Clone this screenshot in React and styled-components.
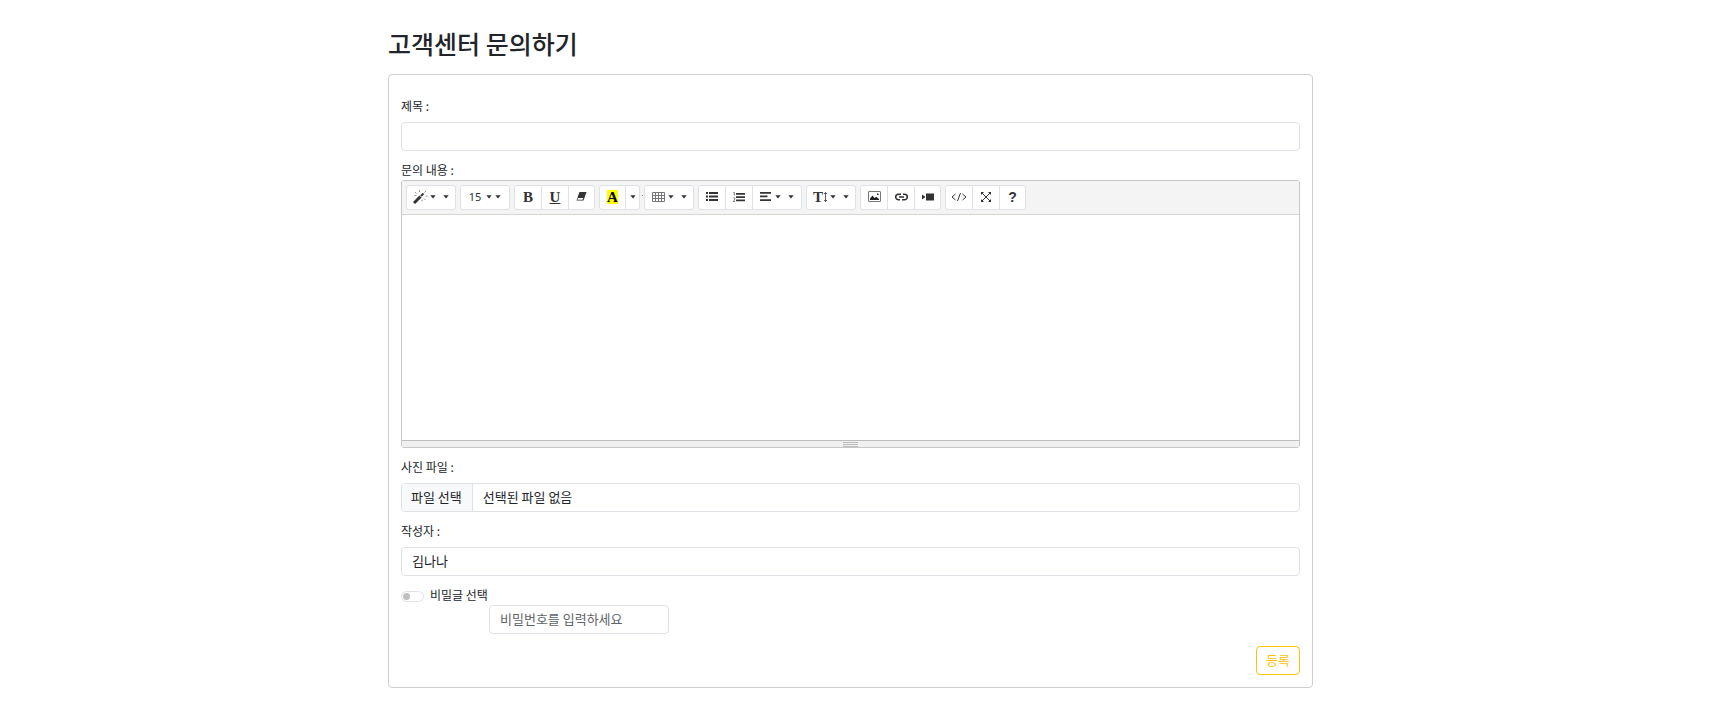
import React from "react";
import styled, { createGlobalStyle } from "styled-components";

const GlobalStyle = createGlobalStyle`
  *, *::before, *::after { box-sizing: border-box; }
  body {
    margin: 0;
    background: #fff;
    color: #212529;
    font-family: "Noto Sans CJK KR", "Noto Sans", sans-serif;
    font-size: 12px;
    line-height: 16px;
  }
  button, input, textarea { font: inherit; color: inherit; margin: 0; }
`;

const Page = styled.main`
  padding: 26px 12px 28px 0;
`;

const Container = styled.div`
  width: 100%;
  max-width: 925px;
  margin: 0 auto;
`;

const Title = styled.h1`
  margin: 0;
  padding-bottom: 14px;
  font-size: 25px;
  line-height: 34px;
  font-weight: 500;
`;

const Card = styled.form`
  display: flex;
  flex-direction: column;
  padding: 12px;
  border: 1px solid #cfcfcf;
  border-radius: 4px;
`;

const Field = styled.div`
  display: flex;
  flex-direction: column;
  gap: ${(p) => (p.$tight ? 2 : 8)}px;
  margin-top: 11px;
`;

const Label = styled.label`
  align-self: flex-start;
`;

const TextInput = styled.input`
  width: ${(p) => p.$width || "100%"};
  height: 29px;
  padding: 0 10px 2px;
  border: 1px solid #dee2e6;
  border-radius: 4px;
  background: #fff;
  font-size: 13px;
  outline: none;
  &::placeholder { color: #5f6469; opacity: 1; }
`;

const Editor = styled.div`
  border: 1px solid #c8c8c8;
  border-radius: 3px;
  overflow: hidden;
`;

const Toolbar = styled.div`
  display: flex;
  flex-wrap: wrap;
  gap: 4px;
  padding: 4px;
  background: #f4f4f4;
  border-bottom: 1px solid #d6d6d6;
`;

const Group = styled.div`
  position: relative;
  display: flex;
  border: 1px solid #dee2e6;
  border-radius: 3px;
  background: #fff;
  ${(p) =>
    p.$dot &&
    `&::after {
      content: "";
      position: absolute;
      right: -4px;
      top: 9px;
      width: 1px;
      height: 1px;
      background: #888;
    }`}
`;

const ToolButton = styled.button`
  display: flex;
  align-items: center;
  justify-content: center;
  width: ${(p) => p.$width || 27}px;
  height: 23px;
  padding: 0 0 2px;
  border: 0;
  background: transparent;
  color: #333;
  cursor: pointer;
  & + & { border-left: 1px solid #dee2e6; }
`;

const Size = styled.span`
  font-family: "Noto Sans", sans-serif;
  font-size: 11px;
  line-height: 16px;
  margin-right: 3px;
`;

const Carets = styled.span`
  display: flex;
  gap: ${(p) => p.$gap || 7}px;
  margin-left: ${(p) => p.$offset || 2}px;
`;

const Letter = styled.span`
  font-family: "Liberation Serif", serif;
  font-size: 15px;
  line-height: 14px;
  font-weight: 700;
  text-decoration: ${(p) => (p.$underline ? "underline" : "none")};
  ${(p) => p.$mark && "width: 11px; text-align: center; background: #ff0; color: #000;"}
`;

const Help = styled.span`
  font-family: "Liberation Sans", sans-serif;
  font-size: 14px;
  line-height: 14px;
  font-weight: 700;
`;

const Glyph = styled.svg`
  display: block;
  flex: none;
`;

const Writing = styled.textarea`
  display: block;
  width: 100%;
  height: 225px;
  padding: 10px;
  border: 0;
  background: #fff;
  resize: none;
  outline: none;
`;

const StatusBar = styled.div`
  display: flex;
  flex-direction: column;
  align-items: center;
  gap: 1px;
  height: 7px;
  padding-top: 1px;
  border-top: 1px solid #bdbdbd;
  background: #f0f0f0;
  cursor: ns-resize;
`;

const GripLine = styled.span`
  width: 15px;
  height: 1px;
  background: #bcbcbc;
`;

const FilePicker = styled.label`
  display: flex;
  position: relative;
  height: 29px;
  border: 1px solid #dee2e6;
  border-radius: 4px;
  overflow: hidden;
  font-size: 13px;
  line-height: 25px;
  cursor: pointer;
`;

const FileInput = styled.input`
  position: absolute;
  inset: 0;
  opacity: 0;
`;

const FileButton = styled.span`
  padding: 0 10px 0 9px;
  border-right: 1px solid #dee2e6;
  background: #f8f9fa;
`;

const FileName = styled.span`
  padding: 0 10px;
`;

const SecretRow = styled.div`
  display: flex;
  align-items: flex-start;
  margin-top: 11px;
`;

const SecretLabel = styled.label`
  display: flex;
  align-items: flex-start;
  gap: 6px;
  min-width: 88px;
`;

const Switch = styled.input.attrs({ type: "checkbox", role: "switch" })`
  appearance: none;
  display: flex;
  align-items: center;
  width: 23px;
  height: 11px;
  margin-top: 4px;
  padding: 0 1px;
  border: 1px solid #dee2e6;
  border-radius: 6px;
  background: #fff;
  &::before {
    content: "";
    width: 7px;
    height: 7px;
    border-radius: 50%;
    background: #bfbfbf;
  }
  &:checked { justify-content: flex-end; }
`;

const PasswordSlot = styled.div`
  padding-top: 18px;
`;

const Footer = styled.div`
  display: flex;
  justify-content: flex-end;
  margin-top: 12px;
`;

const Submit = styled.button`
  width: 44px;
  height: 29px;
  padding: 0 0 2px;
  border: 1px solid #ffc107;
  border-radius: 4px;
  background: #fff;
  color: #ffc107;
  font-size: 13px;
  cursor: pointer;
`;

const Caret = () => (
  <Glyph width="6" height="4" viewBox="0 0 6 4"><path d="M.3 .3h5.400L3 3.500z" fill="#333" /></Glyph>
);
const MagicIcon = () => (
  <Glyph width="15" height="14" viewBox="0 0 15 14" fill="none" stroke="#333">
    <path d="M1 13L7.500 6.500" strokeWidth="3" />
    <path d="M8 6L10.500 3.500" strokeWidth="2" />
    <path d="M6.500 0v2M2 2l1.500 1.500M1.500 5.500h2M12.500 6h2M11 8.500l1.500 1.500M9 9.500v2M11.500 2.500l1.500-1.500" strokeWidth=".7" opacity=".75" />
  </Glyph>
);
const EraserIcon = () => (
  <Glyph width="11" height="9" viewBox="0 0 11 9">
    <path d="M3.500 0H10.500L7.500 8.500H.5z" fill="#333" />
    <path d="M2 6h5.300L6.600 7.700H1.400z" fill="#fff" />
  </Glyph>
);
const TableIcon = () => (
  <Glyph width="13" height="10" viewBox="0 0 13 10" fill="none" stroke="#777">
    <path d="M.5 .5h12v9H.5zM.5 3.500h12M.5 6.500h12M3.500 .5v9M6.500 .5v9M9.500 .5v9" />
  </Glyph>
);
const ListIcon = () => (
  <Glyph width="12" height="9" viewBox="0 0 12 9" fill="#333">
    <path d="M0 0h2v2H0zM0 3.500h2v2H0zM0 7h2v2H0zM3 0h9v2H3zM3 3.500h9v2H3zM3 7h9v2H3z" />
  </Glyph>
);
const OrderedIcon = () => (
  <Glyph width="12" height="10" viewBox="0 0 12 10" fill="#333">
    <path d="M3 1h9v1.700H3zM3 4.200h9v1.700H3zM3 7.500h9v1.700H3z" />
    <path d="M.4 .7L1.300 .3V3.500M.3 6Q1.800 5 1.800 6.500T.3 9.500H2" fill="none" stroke="#555" strokeWidth=".8" />
  </Glyph>
);
const AlignIcon = () => (
  <Glyph width="11" height="9" viewBox="0 0 11 9" fill="#333">
    <path d="M0 0h11v1.700H0zM0 3.600h7.500v1.700H0zM0 7.300h11V9H0z" />
  </Glyph>
);
const HeightIcon = () => (
  <Glyph width="5" height="10" viewBox="0 0 5 10" fill="none" stroke="#333" strokeWidth=".8">
    <path d="M2.500 .5v9M1 2L2.500 .5L4 2M1 8L2.500 9.500L4 8" />
  </Glyph>
);
const PictureIcon = () => (
  <Glyph width="13" height="11" viewBox="0 0 13 11">
    <rect x=".5" y=".5" width="12" height="10" rx=".5" fill="none" stroke="#777" />
    <path d="M2 9V7.500L4.500 4.500L6.500 7L8.200 5.700L11 8V9zM9 2.500h1.500V4H9z" fill="#222" />
  </Glyph>
);
const LinkIcon = () => (
  <Glyph width="13" height="8" viewBox="0 0 13 8" fill="none" stroke="#333" strokeWidth="1.500">
    <path d="M6 1.200H3.500a2.800 2.800 0 0 0 0 5.600H5M8 1.200h1.500a2.800 2.800 0 0 1 0 5.600H7M4 4h5" />
  </Glyph>
);
const VideoIcon = () => (
  <Glyph width="12" height="8" viewBox="0 0 12 8" fill="#333">
    <path d="M4 .5h8v7H4zM0 1.500L3.500 4L0 6.500z" />
  </Glyph>
);
const CodeIcon = () => (
  <Glyph width="16" height="10" viewBox="0 0 16 10" fill="none" stroke="#333">
    <path d="M4.500 2L1 5L4.500 8M11.500 2L15 5L11.500 8M9.500 1L6.500 9" />
  </Glyph>
);
const ExpandIcon = () => (
  <Glyph width="10" height="10" viewBox="0 0 10 10">
    <path d="M1 1L9 9M9 1L1 9" stroke="#333" />
    <path d="M0 0h3L0 3zM7 0h3v3zM0 7v3h3zM10 7v3H7z" fill="#333" />
  </Glyph>
);

const Pick = ({ label, width = 48, offset, children }) => (
  <ToolButton type="button" aria-label={label} $width={width}>
    {children}
    <Carets $offset={offset}><Caret /><Caret /></Carets>
  </ToolButton>
);

export default function App() {
  return (
    <Page>
      <GlobalStyle />
      <Container>
        <Title>고객센터 문의하기</Title>
        <Card onSubmit={(e) => e.preventDefault()}>
          <Field>
            <Label htmlFor="subject">제목 :</Label>
            <TextInput id="subject" type="text" />
          </Field>

          <Field $tight>
            <Label htmlFor="content">문의 내용 :</Label>
            <Editor>
              <Toolbar role="toolbar" aria-label="편집 도구">
                <Group><Pick label="스타일"><MagicIcon /></Pick></Group>
                <Group>
                  <ToolButton type="button" $width={48}>
                    <Size>15</Size>
                    <Carets $gap={3}><Caret /><Caret /></Carets>
                  </ToolButton>
                </Group>
                <Group>
                  <ToolButton type="button" $width={26}><Letter>B</Letter></ToolButton>
                  <ToolButton type="button"><Letter $underline>U</Letter></ToolButton>
                  <ToolButton type="button" $width={26} aria-label="서식 지우기"><EraserIcon /></ToolButton>
                </Group>
                <Group $dot>
                  <ToolButton type="button" $width={25}><Letter $mark>A</Letter></ToolButton>
                  <ToolButton type="button" $width={14} aria-label="색상"><Caret /></ToolButton>
                </Group>
                <Group><Pick label="표" offset={3}><TableIcon /></Pick></Group>
                <Group>
                  <ToolButton type="button" $width={26} aria-label="목록"><ListIcon /></ToolButton>
                  <ToolButton type="button" aria-label="번호 목록"><OrderedIcon /></ToolButton>
                  <Pick label="정렬" width={49} offset={4}><AlignIcon /></Pick>
                </Group>
                <Group>
                  <Pick label="줄 간격"><Letter>T</Letter><HeightIcon /></Pick>
                </Group>
                <Group>
                  <ToolButton type="button" $width={26} aria-label="사진"><PictureIcon /></ToolButton>
                  <ToolButton type="button" aria-label="링크"><LinkIcon /></ToolButton>
                  <ToolButton type="button" $width={26} aria-label="동영상"><VideoIcon /></ToolButton>
                </Group>
                <Group>
                  <ToolButton type="button" $width={26} aria-label="코드 보기"><CodeIcon /></ToolButton>
                  <ToolButton type="button" aria-label="전체 화면"><ExpandIcon /></ToolButton>
                  <ToolButton type="button" $width={26}><Help>?</Help></ToolButton>
                </Group>
              </Toolbar>
              <Writing id="content" />
              <StatusBar><GripLine /><GripLine /><GripLine /></StatusBar>
            </Editor>
          </Field>

          <Field>
            <Label htmlFor="photo">사진 파일 :</Label>
            <FilePicker>
              <FileInput id="photo" type="file" />
              <FileButton>파일 선택</FileButton>
              <FileName>선택된 파일 없음</FileName>
            </FilePicker>
          </Field>

          <Field>
            <Label htmlFor="writer">작성자 :</Label>
            <TextInput id="writer" type="text" defaultValue="김나나" />
          </Field>

          <SecretRow>
            <SecretLabel><Switch />비밀글 선택</SecretLabel>
            <PasswordSlot>
              <TextInput type="password" $width="180px" placeholder="비밀번호를 입력하세요" aria-label="비밀번호" />
            </PasswordSlot>
          </SecretRow>

          <Footer><Submit type="submit">등록</Submit></Footer>
        </Card>
      </Container>
    </Page>
  );
}
